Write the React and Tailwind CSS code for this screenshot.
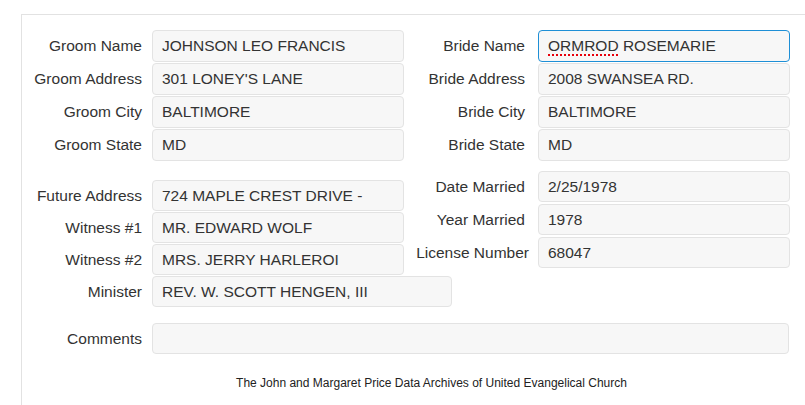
import React from 'react';

const font = { fontFamily: '"Liberation Sans", Arial, sans-serif' };

function Field({ value, focused, wide, tall, children }) {
  return (
    <div
      className={`shrink-0 flex items-center pl-[9px] pr-2 rounded-[4px] border bg-[#f7f7f7] text-[#333] text-[15.5px] whitespace-nowrap overflow-hidden ${
        focused ? 'border-[#1e8fd6]' : 'border-[#e3e3e3]'
      } ${wide ? 'w-[300px]' : 'w-[252px]'} ${tall ? 'h-[32px]' : 'h-[31px]'}`}
    >
      {children ?? value}
    </div>
  );
}

function Row({ label, value, ...rest }) {
  return (
    <div className="flex items-center">
      <div className="shrink-0 w-[130px] pr-[10px] text-right text-[15.5px] text-[#333] whitespace-nowrap">{label}</div>
      <Field value={value} {...rest} />
    </div>
  );
}

function RightRow({ label, value, labelClass = 'pr-[13px]', ...rest }) {
  return (
    <div className="flex items-center">
      <div className={`shrink-0 w-[133px] text-right text-[15.5px] text-[#333] whitespace-nowrap ${labelClass}`}>{label}</div>
      <Field value={value} {...rest} />
    </div>
  );
}

export default function App() {
  return (
    <div className="w-[805px] h-[405px] bg-white overflow-hidden" style={font}>
      <div className="ml-[21px] mt-[14px] h-[391px] border-l border-t border-[#e2e2e2] pt-[15px]">
        {/* couple */}
        <div className="flex">
          <div className="shrink-0 flex flex-col gap-[1px] w-[383px]">
            <Row label="Groom Name" value="JOHNSON LEO FRANCIS" tall />
            <Row label="Groom Address" value="301 LONEY'S LANE" tall />
            <Row label="Groom City" value="BALTIMORE" tall />
            <Row label="Groom State" value="MD" tall />
          </div>
          <div className="flex flex-col gap-[1px]">
            <RightRow label="Bride Name" tall focused>
              <span className="underline decoration-dotted decoration-red-600 decoration-2 underline-offset-[3px]">ORMROD</span>
              &nbsp;ROSEMARIE
            </RightRow>
            <RightRow label="Bride Address" value="2008 SWANSEA RD." tall />
            <RightRow label="Bride City" value="BALTIMORE" tall />
            <RightRow label="Bride State" value="MD" tall />
          </div>
        </div>

        {/* marriage */}
        <div className="flex">
          <div className="shrink-0 flex flex-col gap-[1px] w-[383px] mt-[19px]">
            <Row label="Future Address" value="724 MAPLE CREST DRIVE -" />
            <Row label="Witness #1" value="MR. EDWARD WOLF" />
            <Row label="Witness #2" value="MRS. JERRY HARLEROI" />
            <Row label="Minister" value="REV. W. SCOTT HENGEN, III" wide />
          </div>
          <div className="flex flex-col gap-[2px] mt-[10px] h-fit">
            <RightRow label="Date Married" value="2/25/1978" />
            <RightRow label="Year Married" value="1978" />
            <RightRow label="License Number" value="68047" labelClass="pr-[9px]" />
          </div>
        </div>

        <div className="flex items-center mt-[16px]">
          <div className="shrink-0 w-[130px] pr-[10px] text-right text-[15.5px] text-[#333]">Comments</div>
          <div className="shrink-0 w-[637px] h-[31px] rounded-[4px] border border-[#e3e3e3] bg-[#f7f7f7]" />
        </div>

        <p className="mt-[22px] pl-[36px] text-center text-[12px] leading-[14px] text-[#222]">
          The John and Margaret Price Data Archives of United Evangelical Church
        </p>
      </div>
    </div>
  );
}
